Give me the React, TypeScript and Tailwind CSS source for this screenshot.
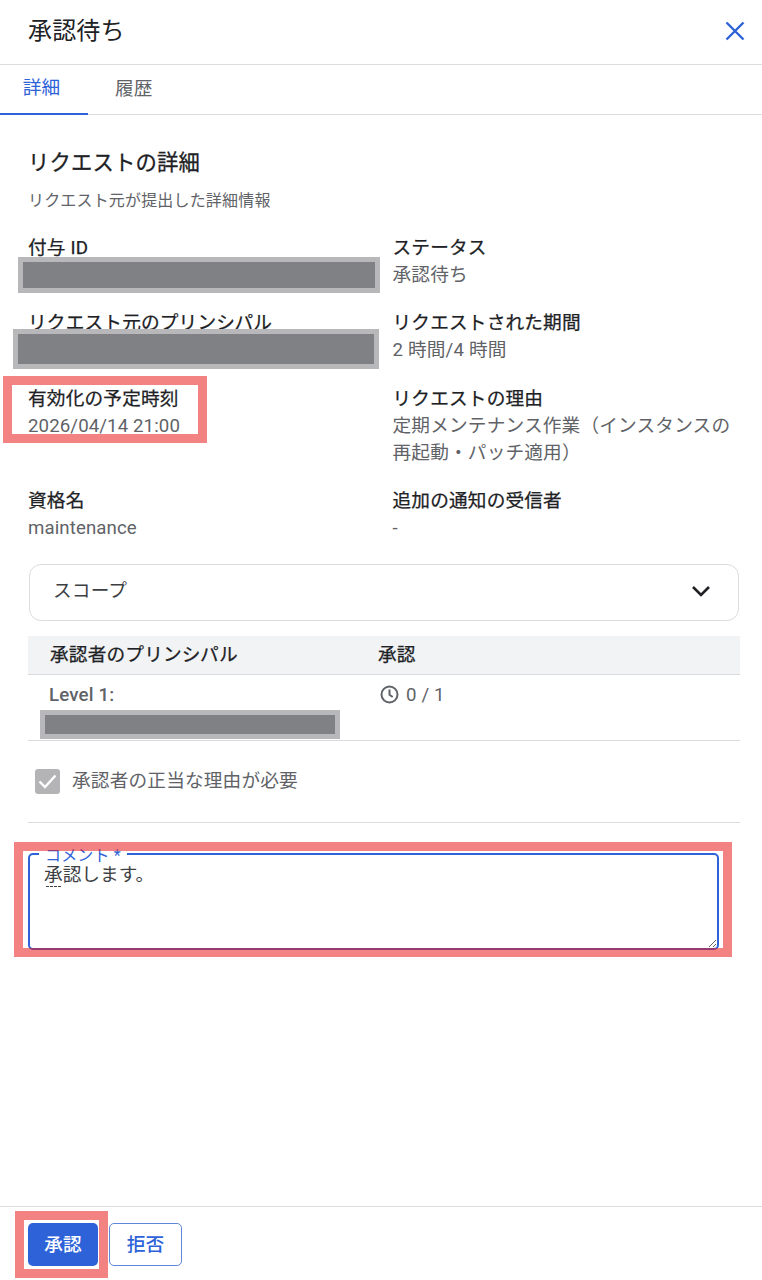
import React from "react";

function Field({ label, children }: { label: React.ReactNode; children?: React.ReactNode }) {
  return (
    <div>
      <div className="h-[27px] leading-[27px] text-[#202124] [-webkit-text-stroke:0.25px_#202124]">{label}</div>
      <div className="leading-[26.67px] text-[#5f6368]">{children}</div>
    </div>
  );
}

function Redact({ c }: { c: string }) {
  return <div className={"absolute bg-[#808184] border-[5px] border-[#b8b8ba] " + c} />;
}

function Mark({ c }: { c: string }) {
  return <div className={"absolute border-[9px] border-[#ea1e1e8c] pointer-events-none " + c} />;
}

export default function App() {
  return (
    <div className="relative w-[762px] h-[1280px] flex flex-col bg-white overflow-hidden text-[18.67px] tracking-[0.17px] font-['Roboto','Noto_Sans_CJK_JP',sans-serif]">
      <header className="h-[65px] shrink-0 flex items-center justify-between pl-[28px] pr-[17px] border-b border-[#dadce0]">
        <h1 className="text-[24px] text-[#202124] font-normal pb-[2px]">承認待ち</h1>
        <svg width="20" height="20" viewBox="0 0 20 20" className="mb-[3px]">
          <path d="M1.5 1.5 18.5 18.5M18.5 1.5 1.5 18.5" stroke="#2d62d8" strokeWidth="2.4" fill="none" />
        </svg>
      </header>

      <nav className="h-[50px] shrink-0 flex border-b border-[#dadce0]">
        <div className="w-[88px] h-[50px] flex items-center justify-center pb-[2px] pr-[5px] text-[#2d62d8] border-b-[2px] border-[#2d62d8]">詳細</div>
        <div className="flex items-center pl-[27px] pb-[2px] text-[#5f6368]">履歴</div>
      </nav>

      <main className="flex-1 px-[28px]">
        <h2 className="mt-[33px] text-[21.33px] leading-[30px] font-normal text-[#202124] [-webkit-text-stroke:0.3px_#202124]">リクエストの詳細</h2>
        <p className="mt-[11px] text-[16px] leading-[24px] text-[#5f6368]">リクエスト元が提出した詳細情報</p>

        <div className="mt-[21.5px] grid grid-cols-[364.5px_1fr] gap-y-[22px]">
          <Field label="付与 ID" />
          <Field label="ステータス">承認待ち</Field>
          <Field label="リクエスト元のプリンシパル" />
          <Field label="リクエストされた期間">2 時間/4 時間</Field>
          <Field label="有効化の予定時刻"><span className="tracking-[0.1px]">2026/04/14 21:00</span></Field>
          <Field label="リクエストの理由">
            <span className="block w-[345px]">定期メンテナンス作業（インスタンスの再起動・パッチ適用）</span>
          </Field>
          <Field label="資格名"><span className="tracking-[0.1px]">maintenance</span></Field>
          <Field label="追加の通知の受信者">-</Field>
        </div>

        <div className="mt-[22px] ml-[1px] w-[710px] h-[57px] rounded-[12px] border border-[#dadce0] flex items-center justify-between pl-[23px] pr-[27px] text-[#3c4043]">
          <span className="pb-[3px]">スコープ</span>
          <svg width="20" height="12" viewBox="0 0 20 12" className="mb-[2px]">
            <path d="M2 2 10 10 18 2" stroke="#202124" strokeWidth="2.6" fill="none" />
          </svg>
        </div>

        <div className="mt-[15px] w-[712px]">
          <div className="h-[39px] flex items-center bg-[#f1f3f4] border-b border-[#dadce0] text-[#202124] [-webkit-text-stroke:0.25px_#202124]">
            <div className="w-[350px] pl-[22px]">承認者のプリンシパル</div>
            <div>承認</div>
          </div>
          <div className="h-[66px] flex border-b border-[#dadce0] text-[#5f6368]">
            <div className="w-[350px] pl-[21px] pt-[7px] font-medium leading-[27px]">Level 1:</div>
            <div className="flex items-center h-[40px] gap-[7px] pl-[2px]">
              <svg width="19" height="19" viewBox="0 0 19 19" fill="none" stroke="#5f6368" strokeWidth="2">
                <circle cx="9.5" cy="9.5" r="8" />
                <path d="M9.5 4.5v5.2l3.2 2.3" />
              </svg>
              <span>0 / 1</span>
            </div>
          </div>
        </div>

        <div className="mt-[26px] ml-[7px] flex items-center gap-[12px] text-[#5f6368]">
          <div className="w-[25px] h-[25px] rounded-[3px] bg-[#b4b4b6] flex items-center justify-center">
            <svg width="19" height="15" viewBox="0 0 19 15" fill="none" stroke="#fff" strokeWidth="2.4">
              <path d="M1.5 7.5 7 13 17.5 1.5" />
            </svg>
          </div>
          <span className="pb-[2px]">承認者の正当な理由が必要</span>
        </div>

        <div className="mt-[25px] w-[712px] border-b border-[#dadce0]" />

        <div className="relative mt-[30px] w-[691px] h-[96px]">
          <textarea
            readOnly
            defaultValue="承認します。"
            className="block w-[691px] h-[97px] rounded-[5px] border-[2px] border-[#2d62d8] pl-[14px] pt-[7px] leading-[27px] tracking-normal text-[#3c4043] outline-none resize-y"
          />
          <span className="absolute left-[11px] top-[-5px] px-[6px] bg-white h-[16px] text-[16px] leading-[16px] text-[#2d62d8]">コメント *</span>
          <span className="absolute left-[18px] top-[33px] w-[15px] border-b border-dashed border-[#3c4043]" />
        </div>
      </main>

      <footer className="h-[74px] shrink-0 flex items-start gap-[11px] pl-[28px] pt-[16px] border-t border-[#dadce0]">
        <button className="w-[70px] h-[43px] rounded-[5px] bg-[#2d62d8] text-white font-medium">承認</button>
        <button className="w-[73px] h-[43px] rounded-[5px] bg-white border border-[#5f86d8] text-[#2d62d8] font-medium">拒否</button>
      </footer>

      <Redact c="left-[18px] top-[257px] w-[362px] h-[36px]" />
      <Redact c="left-[13px] top-[329px] w-[366px] h-[40px]" />
      <Redact c="left-[40px] top-[710px] w-[300px] h-[29px]" />
      <Mark c="left-[3px] top-[376px] w-[204px] h-[67px]" />
      <Mark c="left-[14px] top-[842px] w-[718px] h-[115px]" />
      <Mark c="left-[15px] top-[1211px] w-[93px] h-[67px]" />
    </div>
  );
}
